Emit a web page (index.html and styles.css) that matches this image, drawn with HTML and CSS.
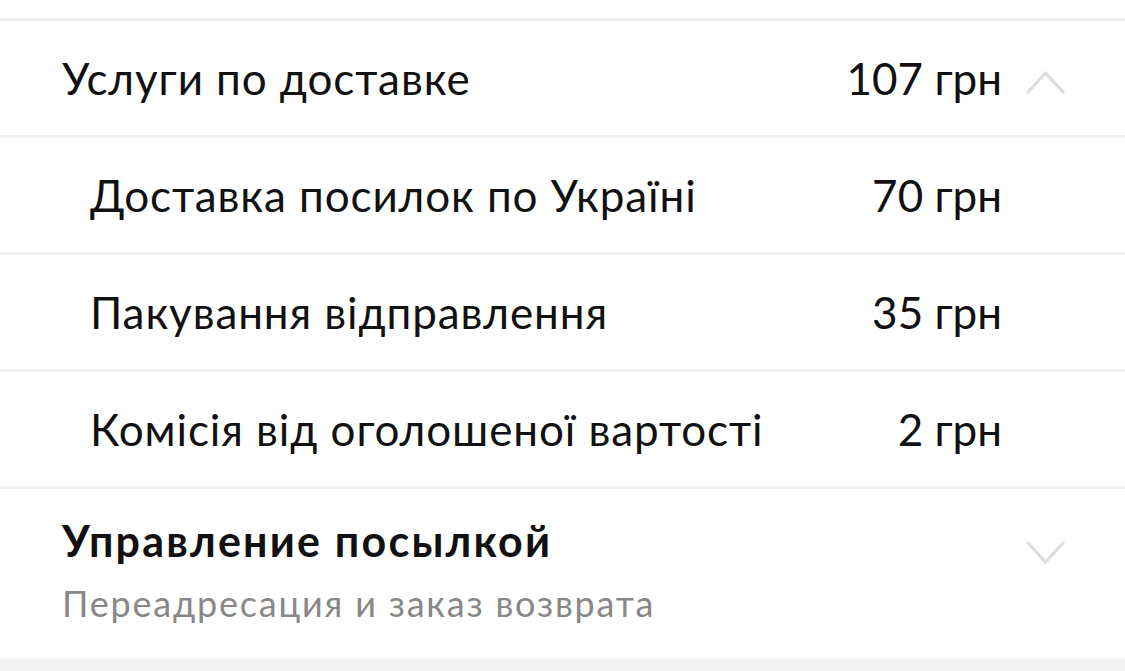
FILE: index.html
```html
<!DOCTYPE html>
<html lang="ru">
  <head>
    <meta charset="UTF-8" />
    <meta name="viewport" content="width=device-width, initial-scale=1.0" />
    <title>Услуги по доставке</title>
    <link rel="stylesheet" href="styles.css">
  </head>
  <body>
    <div class="list">
      <div class="row head">
        <span class="label">Услуги по доставке</span>
        <span class="price">107 грн</span>
        <svg class="chevron up" viewBox="0 0 39 24" width="39" height="24">
          <path d="M2 22 L19.5 3 L37 22" />
        </svg>
      </div>

      <div class="row sub">
        <span class="label">Доставка посилок по Україні</span>
        <span class="price">70 грн</span>
      </div>
      <div class="row sub">
        <span class="label">Пакування відправлення</span>
        <span class="price">35 грн</span>
      </div>
      <div class="row sub">
        <span class="label">Комісія від оголошеної вартості</span>
        <span class="price">2 грн</span>
      </div>

      <div class="row manage">
        <div class="manage-text">
          <div class="title">Управление посылкой</div>
          <div class="subtitle">Переадресация и заказ возврата</div>
        </div>
        <svg class="chevron down" viewBox="0 0 39 24" width="39" height="24">
          <path d="M2 2 L19.5 21 L37 2" />
        </svg>
      </div>
    </div>
    <div class="footer-band"></div>
  </body>
</html>
```

FILE: styles.css
```css
body {
  margin: 0;
  font-family: Lato, "Open Sans", sans-serif;
  color: #111;
  background-color: #fff;
}
.list {
  padding-top: 18px;
}
.row {
  display: flex;
  align-items: center;
  border-top: 3px solid #efefef;
  font-size: 44px;
}
.head {
  height: 114px;
  padding: 0 60px 0 62px;
}
.sub {
  height: 114px;
  padding: 0 123px 0 90px;
}
.label {
  flex: 1;
  letter-spacing: 0.9px;
}
.price {
  white-space: nowrap;
}
.chevron {
  margin-left: 24px;
  flex-shrink: 0;
}
.chevron.up {
  margin-top: 8px;
}
.chevron path {
  fill: none;
  stroke: #dddddd;
  stroke-width: 3.2;
  stroke-linecap: round;
  stroke-linejoin: round;
}
.manage {
  height: 169px;
  padding: 0 60px 0 62px;
  align-items: flex-start;
}
.manage-text {
  flex: 1;
  padding-top: 24px;
}
.chevron.down {
  margin-top: 52px;
}
.title {
  font-weight: bold;
  font-size: 43px;
  line-height: 56px;
  letter-spacing: 2.2px;
}
.subtitle {
  font-size: 36px;
  line-height: 44px;
  letter-spacing: 1.8px;
  color: #888;
  margin-top: 12px;
}
.footer-band {
  height: 13px;
  background-color: #f2f2f2;
}
```
